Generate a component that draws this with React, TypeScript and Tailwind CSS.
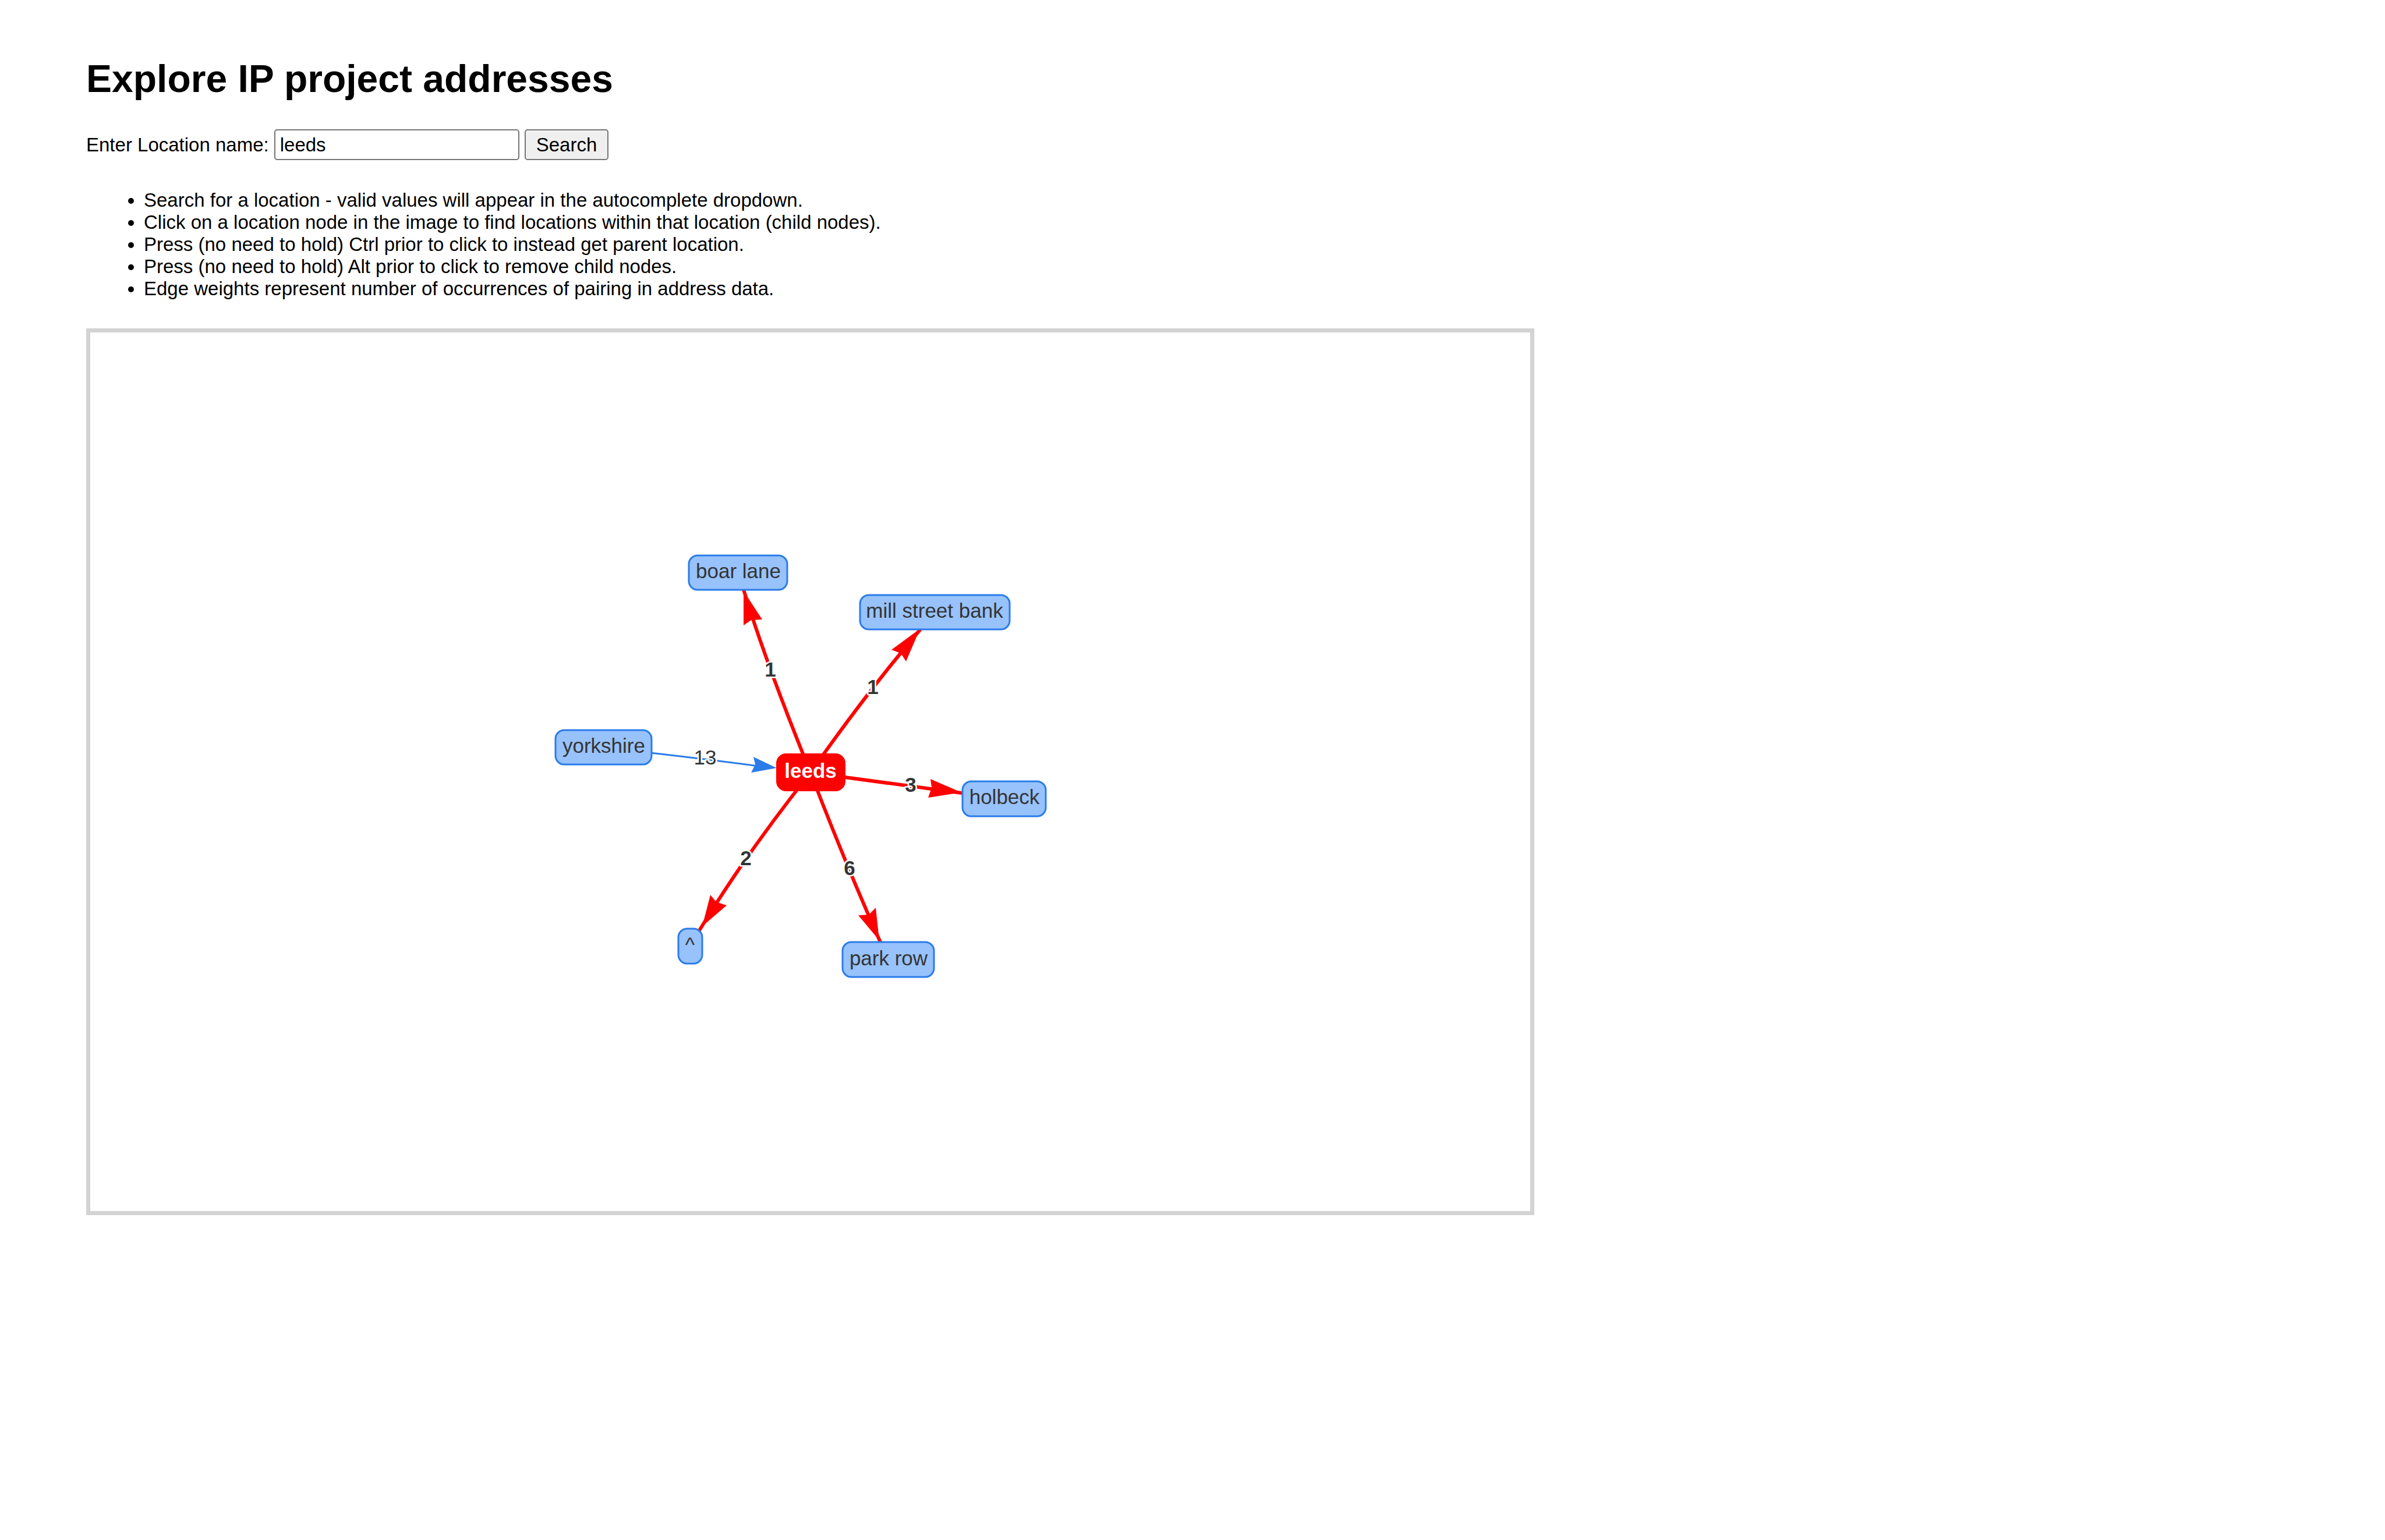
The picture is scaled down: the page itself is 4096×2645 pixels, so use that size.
type NodeBox = { id: string; x: number; y: number; w: number; h: number; tx: number; ty: number; selected?: boolean };
type Edge = { id: string; d: string; arrow: string; label: string; lx: number; ly: number; selected: boolean };

const S = 0.824;
const OX = 188;
const OY = 692;
const px = (v: number) => Math.round((v - OX) * S);
const py = (v: number) => Math.round((v - OY) * S);

const node = (id: string, x1: number, y1: number, x2: number, y2: number, base: number, selected = false): NodeBox => ({
  id,
  x: px(x1),
  y: py(y1),
  w: px(x2) - px(x1),
  h: py(y2) - py(y1),
  tx: px((x1 + x2) / 2),
  ty: py(base),
  selected,
});

const nodes: NodeBox[] = [
  node('boar lane', 1436, 1157, 1641, 1229, 1204),
  node('mill street bank', 1792, 1239, 2104, 1311, 1287),
  node('yorkshire', 1158, 1521, 1358, 1593, 1568),
  node('holbeck', 2006, 1628, 2180, 1700, 1675),
  node('^', 1414, 1935, 1463, 2007, 1983),
  node('park row', 1756, 1963, 1947, 2035, 2011),
  node('leeds', 1620, 1572, 1759, 1646, 1621, true),
];

const curve = (p: number[]) => `M${px(p[0])} ${py(p[1])}Q${px(p[2])} ${py(p[3])} ${px(p[4])} ${py(p[5])}`;
const poly = (p: number[]) => {
  const pts: string[] = [];
  for (let i = 0; i < p.length; i += 2) pts.push(`${px(p[i])},${py(p[i + 1])}`);
  return pts.join(' ');
};

const edges: Edge[] = [
  { id: 'yorkshire', d: curve([1258, 1557, 1468, 1580, 1600, 1598]), arrow: poly([1619, 1600, 1570, 1577, 1574, 1593, 1566, 1609]), label: '13', lx: px(1470), ly: py(1592), selected: false },
  { id: 'boar lane', d: curve([1689, 1609, 1592, 1370, 1547, 1220]), arrow: poly([1550, 1231, 1588, 1290, 1566, 1292, 1550, 1302]), label: '1', lx: px(1605), ly: py(1409), selected: true },
  { id: 'mill street bank', d: curve([1689, 1609, 1810, 1436, 1935, 1290]), arrow: poly([1917, 1310, 1858, 1353, 1877, 1361, 1888, 1378]), label: '1', lx: px(1819), ly: py(1446), selected: true },
  { id: 'holbeck', d: curve([1689, 1609, 1897, 1637, 2093, 1664]), arrow: poly([2004, 1651, 1939, 1623, 1942, 1641, 1934, 1662]), label: '3', lx: px(1898), ly: py(1649), selected: true },
  { id: '^', d: curve([1689, 1609, 1550, 1785, 1454, 1945]), arrow: poly([1463, 1930, 1480, 1864, 1493, 1879, 1514, 1886]), label: '2', lx: px(1555), ly: py(1802), selected: true },
  { id: 'park row', d: curve([1689, 1609, 1762, 1800, 1842, 1980]), arrow: poly([1833, 1959, 1789, 1907, 1811, 1905, 1825, 1891]), label: '6', lx: px(1770), ly: py(1823), selected: true },
];

const tips = [
  'Search for a location - valid values will appear in the autocomplete dropdown.',
  'Click on a location node in the image to find locations within that location (child nodes).',
  'Press (no need to hold) Ctrl prior to click to instead get parent location.',
  'Press (no need to hold) Alt prior to click to remove child nodes.',
  'Edge weights represent number of occurrences of pairing in address data.',
];

function Network() {
  return (
    <svg viewBox="0 0 2473 1509" className="block h-auto w-full" role="img" aria-label="Location network">
      {edges.map((e) => (
        <g key={e.id}>
          <path d={e.d} fill="none" className={e.selected ? 'stroke-[#ff0000] stroke-[6px]' : 'stroke-[#2b7ce9] stroke-[3px]'} />
          <polygon points={e.arrow} className={e.selected ? 'fill-[#ff0000]' : 'fill-[#2b7ce9]'} />
          <text
            x={e.lx}
            y={e.ly}
            textAnchor="middle"
            paintOrder="stroke"
            strokeLinejoin="round"
            className={
              e.selected
                ? 'fill-[#343434] stroke-white stroke-[5px] text-[35px] font-bold'
                : 'fill-[#343434] stroke-white stroke-[5px] text-[35px]'
            }
          >
            {e.label}
          </text>
        </g>
      ))}
      {nodes.map((n) => (
        <g key={n.id}>
          <rect
            x={n.x}
            y={n.y}
            width={n.w}
            height={n.h}
            rx={15}
            className={n.selected ? 'fill-[#ff0000] stroke-[#ff0000] stroke-[4px]' : 'fill-[#97c2fc] stroke-[#2b7ce9] stroke-[3px]'}
          />
          <text
            x={n.tx}
            y={n.ty}
            textAnchor="middle"
            className={n.selected ? 'fill-white text-[35px] font-bold' : 'fill-[#343434] text-[35px]'}
          >
            {n.id}
          </text>
        </g>
      ))}
    </svg>
  );
}

export default function App() {
  return (
    <main className="min-h-screen bg-white px-[148px] pt-[97px] font-['Liberation_Sans',Arial,sans-serif] text-[33px] leading-[38px] text-black">
      <h1 className="text-[66px] leading-[76px] font-bold">Explore IP project addresses</h1>
      <form className="mt-[49px] flex flex-wrap items-center gap-[9px]" onSubmit={(e) => e.preventDefault()}>
        <label htmlFor="location">Enter Location name:</label>
        <input
          id="location"
          type="text"
          defaultValue="leeds"
          className="h-[53px] w-[421px] rounded-[5px] border-2 border-[#767676] bg-white px-[8px]"
        />
        <button type="submit" className="h-[53px] rounded-[5px] border-2 border-[#767676] bg-[#efefef] px-[18px]">
          Search
        </button>
      </form>
      <ul className="mt-[50px] list-disc pl-[99px]">
        {tips.map((t) => (
          <li key={t}>{t}</li>
        ))}
      </ul>
      <section className="mt-[49px] w-full max-w-[2487px] border-[7px] border-[#d3d3d3]">
        <Network />
      </section>
    </main>
  );
}
